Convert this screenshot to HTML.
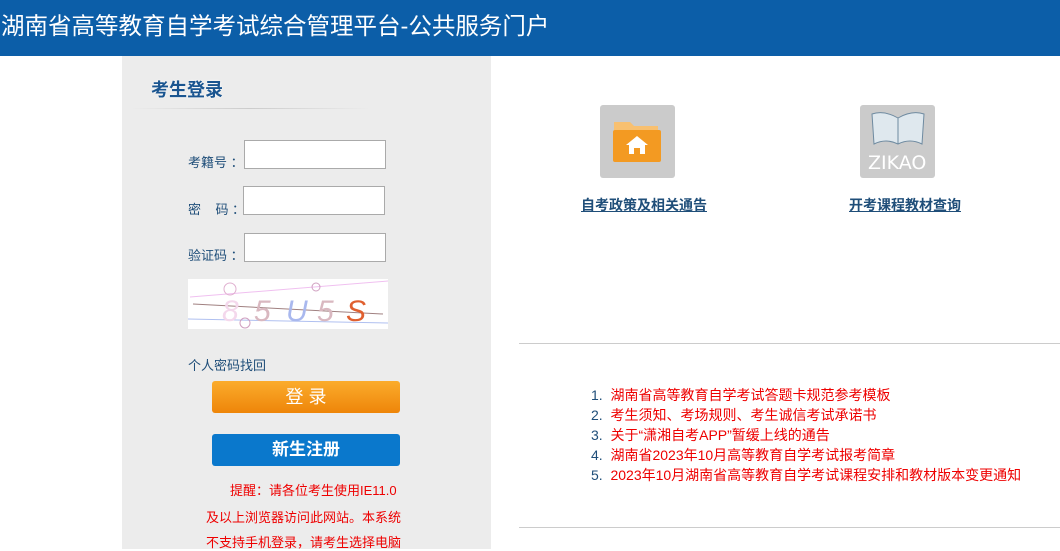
<!DOCTYPE html>
<html><head><meta charset="utf-8"><style>
*{margin:0;padding:0;box-sizing:border-box}
body{width:1060px;height:549px;overflow:hidden;background:#fff;font-family:"Liberation Sans","Noto Sans CJK SC",sans-serif;position:relative}
.hd{position:absolute;left:0;top:0;width:1060px;height:56px;background:#0c5ea8;color:#fff;font-size:23.5px;line-height:52px;padding-left:1px;white-space:nowrap}
.lp{position:absolute;left:122px;top:56px;width:369px;height:493px;background:#ececec}
.a{position:absolute;white-space:nowrap}
.lbl{font-size:13px;color:#1f4e79}
.in{position:absolute;width:142px;height:29px;background:#fff;border:1px solid #aaa}
.btn{position:absolute;left:212px;width:188px;height:32px;border-radius:3px;color:#fff;text-align:center;font-size:18px;line-height:32px}
.red{color:#e00;font-size:13px}
ol li{height:20px}
</style></head><body>
<div class="hd">湖南省高等教育自学考试综合管理平台-公共服务门户</div>
<div class="lp"></div>
<div class="a" style="left:151px;top:76px;font-size:18px;color:#1a5590;font-weight:bold;text-shadow:0 0 2px #fff">考生登录</div>
<div class="a" style="left:130px;top:108px;width:240px;height:1px;background:linear-gradient(90deg,#ececec,#ccc,#ececec)"></div>
<div class="a lbl" style="left:188px;top:152px">考籍号 ：</div>
<div class="in" style="left:244px;top:140px"></div>
<div class="a lbl" style="left:188px;top:199px">密&nbsp;&nbsp;&nbsp;&nbsp;码 ：</div>
<div class="in" style="left:243px;top:186px"></div>
<div class="a lbl" style="left:188px;top:245px">验证码 ：</div>
<div class="in" style="left:244px;top:233px"></div>
<svg class="a" style="left:188px;top:279px" width="200" height="50">
<rect width="200" height="50" fill="#fff"/>
<line x1="2" y1="18" x2="200" y2="2" stroke="#f0c0f0"/>
<line x1="5" y1="25" x2="195" y2="35" stroke="#a08080"/>
<line x1="0" y1="40" x2="200" y2="44" stroke="#b0c0f0"/>
<circle cx="42" cy="10" r="6" fill="none" stroke="#e0b0d0"/>
<circle cx="128" cy="8" r="4" fill="none" stroke="#d0a0c0"/>
<circle cx="57" cy="44" r="5" fill="none" stroke="#d0a0c0"/>
<text x="34" y="42" font-size="30" font-style="italic" fill="#f4d8ec" font-family="Liberation Sans">8</text>
<text x="66" y="42" font-size="30" font-style="italic" fill="#d9b8c0" font-family="Liberation Sans">5</text>
<text x="98" y="42" font-size="30" font-style="italic" fill="#a9b8ee" font-family="Liberation Sans">U</text>
<text x="129" y="42" font-size="30" font-style="italic" fill="#d9b8c0" font-family="Liberation Sans">5</text>
<text x="158" y="42" font-size="30" font-style="italic" fill="#e06030" font-family="Liberation Sans">S</text>
</svg>
<div class="a lbl" style="left:188px;top:355px">个人密码找回</div>
<div class="btn" style="top:381px;background:linear-gradient(#fbac2c,#ee8509)">登 录</div>
<div class="btn" style="top:434px;background:#0a78cc;font-weight:bold;font-size:17px">新生注册</div>
<div class="a red" style="left:230px;top:480px">提醒：请各位考生使用IE11.0</div>
<div class="a red" style="left:206px;top:507px">及以上浏览器访问此网站。本系统</div>
<div class="a red" style="left:206px;top:532px">不支持手机登录，请考生选择电脑</div>

<div class="a" style="left:600px;top:105px;width:75px;height:73px;background:#cbcbcb;border-radius:3px"></div>
<svg class="a" style="left:612px;top:118px" width="50" height="46">
<path d="M2 4h16l4 4h24v6H2z" fill="#f8c070"/>
<rect x="1" y="12" width="48" height="32" rx="2" fill="#f39a22"/>
<path d="M25 18l-11 9h3v9h16v-9h3z" fill="#fff"/><rect x="22" y="30" width="6" height="6" fill="#f39a22"/>
</svg>
<div class="a" style="left:860px;top:105px;width:75px;height:73px;background:#cbcbcb;border-radius:3px"></div>
<svg class="a" style="left:868px;top:108px" width="60" height="40">
<path d="M4 6 Q16 2 30 10 Q44 2 56 6 L54 36 Q42 30 30 36 Q18 30 6 36z" fill="#dfe8ee" stroke="#6e8aa0"/>
<path d="M30 10 V36" stroke="#6e8aa0"/>
</svg>
<div class="a" style="left:868px;top:152px;font-size:19px;color:#fff;font-family:'DejaVu Sans',sans-serif">ZIKAO</div>
<div class="a" style="left:581px;top:195px;font-size:14px;font-weight:bold;color:#1f4e79;text-decoration:underline">自考政策及相关通告</div>
<div class="a" style="left:849px;top:195px;font-size:14px;font-weight:bold;color:#1f4e79;text-decoration:underline">开考课程教材查询</div>
<div class="a" style="left:519px;top:343px;width:541px;height:1px;background:#ccc"></div>
<ol class="a" style="left:591px;top:385px;font-size:14px;color:#1f4e79;list-style:none">
<li>1.&nbsp; <span style="color:#e00">湖南省高等教育自学考试答题卡规范参考模板</span></li>
<li>2.&nbsp; <span style="color:#e00">考生须知、考场规则、考生诚信考试承诺书</span></li>
<li>3.&nbsp; <span style="color:#e00">关于“潇湘自考APP”暂缓上线的通告</span></li>
<li>4.&nbsp; <span style="color:#e00">湖南省2023年10月高等教育自学考试报考简章</span></li>
<li>5.&nbsp; <span style="color:#e00">2023年10月湖南省高等教育自学考试课程安排和教材版本变更通知</span></li>
</ol>
<div class="a" style="left:519px;top:527px;width:541px;height:1px;background:#ccc"></div>
</body></html>
